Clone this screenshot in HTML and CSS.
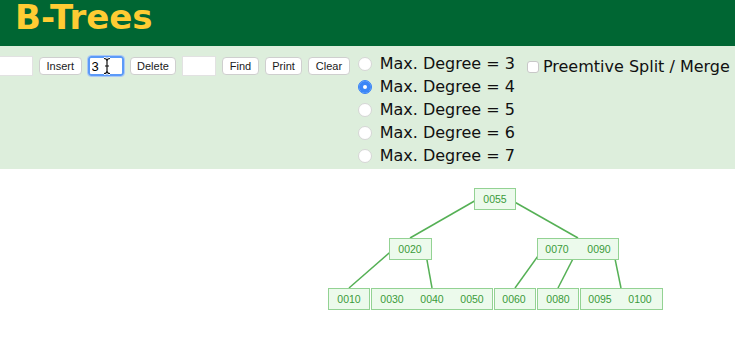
FILE: index.html
```html
<!DOCTYPE html>
<html lang="en">
<head>
    <meta charset="UTF-8">
    <meta name="viewport" content="width=device-width, initial-scale=1.0">
    <title>B-Trees</title>
    <link rel="stylesheet" href="styles.css">
</head>
<body>

    <div class="header">
        <h1 class="title">B-Trees</h1>
    </div>

    <div class="controls">
        <div class="actions">
            <input type="text" class="field first">
            <button>Insert</button>
            <span class="focus-wrap">
                <input type="text" class="field focused" value="3">
                <svg class="ibeam" width="8" height="18" viewBox="0 0 8 18">
                    <path d="M1 1.5 Q4 1.5 4 4 L4 14 Q4 16.5 1 16.5 M7 1.5 Q4 1.5 4 4 M4 14 Q4 16.5 7 16.5 M2 9 L6 9" fill="none" stroke="#fff" stroke-width="3"/>
                    <path d="M1 1.5 Q4 1.5 4 4 L4 14 Q4 16.5 1 16.5 M7 1.5 Q4 1.5 4 4 M4 14 Q4 16.5 7 16.5 M2 9 L6 9" fill="none" stroke="#111" stroke-width="1.2"/>
                </svg>
            </span>
            <button>Delete</button>
            <input type="text" class="field small">
            <button>Find</button>
            <button>Print</button>
            <button>Clear</button>
        </div>

        <div class="degrees">
            <label class="radio"><input type="radio" name="degree"> Max. Degree = 3</label>
            <label class="radio"><input type="radio" name="degree" checked> Max. Degree = 4</label>
            <label class="radio"><input type="radio" name="degree"> Max. Degree = 5</label>
            <label class="radio"><input type="radio" name="degree"> Max. Degree = 6</label>
            <label class="radio"><input type="radio" name="degree"> Max. Degree = 7</label>
        </div>

        <label class="check"><input type="checkbox"> Preemtive Split / Merge</label>
    </div>

    <div class="canvas">
        <svg class="tree" width="735" height="171" viewBox="0 169 735 171">
            <!-- edges -->
            <g class="edge">
                <line x1="478" y1="199" x2="410" y2="238"/>
                <line x1="511" y1="200" x2="578" y2="238"/>
                <line x1="396" y1="247" x2="349" y2="288"/>
                <line x1="425" y1="249" x2="432" y2="288"/>
                <line x1="543" y1="249" x2="515" y2="288"/>
                <line x1="578" y1="249" x2="558" y2="288"/>
                <line x1="613" y1="249" x2="621" y2="288"/>
            </g>

            <!-- nodes -->
            <g class="node">
                <rect x="474.5" y="188.5" width="41" height="21"/>
                <rect x="389.5" y="238.5" width="42" height="21"/>
                <rect x="537.5" y="238.5" width="81" height="21"/>
                <rect x="328.5" y="288.5" width="41" height="21"/>
                <rect x="371.5" y="288.5" width="121" height="21"/>
                <rect x="494.5" y="288.5" width="41" height="21"/>
                <rect x="537.5" y="288.5" width="41" height="21"/>
                <rect x="580.5" y="288.5" width="82" height="21"/>
            </g>

            <g class="key">
                <text x="495" y="203">0055</text>
                <text x="410" y="253">0020</text>
                <text x="557" y="253">0070</text>
                <text x="599" y="253">0090</text>
                <text x="349" y="303">0010</text>
                <text x="392" y="303">0030</text>
                <text x="432" y="303">0040</text>
                <text x="472" y="303">0050</text>
                <text x="514" y="303">0060</text>
                <text x="558" y="303">0080</text>
                <text x="600" y="303">0095</text>
                <text x="640" y="303">0100</text>
            </g>
        </svg>
    </div>

</body>
</html>
```

FILE: styles.css
```css
body {
    margin: 0;
    font-family: "DejaVu Sans", Verdana, sans-serif;
    background-color: #fff;
    overflow: hidden;
}
.header {
    background-color: #006633;
    height: 46px;
    padding-left: 15px;
    box-sizing: border-box;
}
.title {
    margin: 0;
    font-size: 34px;
    line-height: 40px;
    height: 40px;
    font-weight: bold;
    color: #ffcc33;
    transform: translateY(-3px);
}
.controls {
    display: flex;
    align-items: flex-start;
    background-color: #ddeedc;
    height: 123px;
    box-sizing: border-box;
    padding-top: 6px;
}
.actions {
    display: flex;
    align-items: center;
    gap: 6px;
    margin-top: 4px;
    margin-left: -3px;
}
.field {
    width: 36px;
    height: 20px;
    box-sizing: border-box;
    border: 1px solid #e2e2e2;
    background: #fff;
    padding: 0 2px;
    font-family: "Liberation Sans", Arial, sans-serif;
    font-size: 13px;
    color: #000;
    margin: 0;
}
.field.small {
    width: 34px;
}
.focus-wrap {
    position: relative;
    display: inline-flex;
}
.field.focused {
    border: 2px solid #5b9af8;
    border-radius: 3px;
    outline: 1px solid #a9c8f6;
}
.ibeam {
    position: absolute;
    left: 15px;
    top: 1px;
}
button {
    height: 18px;
    padding: 0 6.5px;
    background: #fff;
    border: 1px solid #cfcfcf;
    border-radius: 4px;
    font-family: "Liberation Sans", Arial, sans-serif;
    font-size: 11px;
    color: #1a1a1a;
    cursor: pointer;
}
.degrees {
    display: flex;
    flex-direction: column;
    margin-left: 8px;
}
.radio, .check {
    display: flex;
    align-items: center;
    font-size: 16px;
    color: #111;
    height: 23px;
    white-space: nowrap;
}
.radio input {
    appearance: none;
    width: 14px;
    height: 14px;
    margin: 0 8px 0 0;
    border-radius: 50%;
    background: #fff;
    border: 1px solid #d6d6d6;
    box-sizing: border-box;
}
.radio input:checked {
    background: #3b86f7;
    border-color: #3b86f7;
    box-shadow: inset 0 0 0 4px #3b86f7, inset 0 0 0 7px #fff;
}
.check {
    margin-left: 12px;
    margin-top: 3px;
}
.check input {
    appearance: none;
    width: 12px;
    height: 12px;
    margin: 0 4px 0 0;
    border: 1px solid #c8c8c8;
    border-radius: 3px;
    background: #fff;
    box-sizing: border-box;
}
.tree {
    display: block;
}
.edge line {
    stroke: #55b055;
    stroke-width: 1.5;
}
.node rect {
    fill: #ecfaec;
    stroke: #93d293;
    stroke-width: 1;
}
.key text {
    font-family: "Liberation Sans", Arial, sans-serif;
    font-size: 10.5px;
    fill: #3a9a3a;
    text-anchor: middle;
}
```
